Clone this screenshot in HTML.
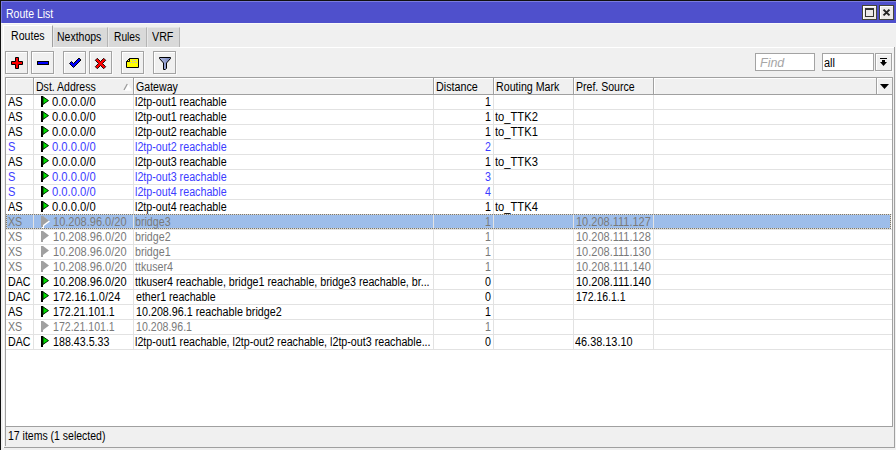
<!DOCTYPE html>
<html lang="en">
<head>
<meta charset="utf-8">
<title>Route List</title>
<style>
html,body{margin:0;padding:0}
body{width:896px;height:450px;position:relative;overflow:hidden;background:#f0f0f0;
 font-family:"Liberation Sans",sans-serif;font-size:12px;line-height:15px;color:#000}
div,span,svg{position:absolute;box-sizing:border-box}
.t{white-space:nowrap;transform-origin:0 0;height:15px}
.k{color:#000}.b{color:#3c3cff}.g{color:#797979}.w{color:#fff}.i{color:#a6a6a6;font-style:italic}
.win{left:0;top:0;width:896px;height:450px;overflow:hidden;background:#f0f0f0}
.edge-t{left:0;top:0;width:896px;height:1px;background:#111}
.edge-l{left:0;top:0;width:1px;height:450px;background:#111}
.title{left:1px;top:1px;width:895px;height:22px;background:#4f50cc;border-top:1px solid #7a7be0;border-left:1px solid #7a7be0}
.tb{width:15px;height:15px;background:#ece9e8;border:1px solid #444438;box-shadow:inset 1px 1px 0 #fff}
.tab{top:27px;height:20px;background:#d9d9d9;border-top:1px solid #e6e6e6;border-left:1px solid #e8e8e8;border-right:1px solid #b4b4b4}
.hl23{left:1px;top:23px;width:895px;height:1px;background:#fafafa}
.tab.act{top:25px;height:22px;background:#f0f0f0;border-top:1px solid #fff;border-left:1px solid #fff;border-right:1px solid #a0a0a0}
.page-t{left:53px;top:47px;width:842px;height:1px;background:#fff}
.page-l{left:3px;top:47px;width:1px;height:401px;background:#fff}
.page-r{left:894px;top:47px;width:1px;height:401px;background:#a0a0a0}
.page-b{left:4px;top:447px;width:891px;height:1px;background:#a0a0a0}
.btn{top:51px;width:23px;height:23px;background:#f0f0f0;border:1px solid #a3a3a3;box-shadow:inset 1px 1px 0 #fff,1px 1px 0 #fafafa}
.btn svg{left:-1px;top:-1px}
.inp{top:53px;height:18px;background:#fff;border:1px solid #a3a3a3}
.table{left:5px;top:77px;width:888px;height:350px;background:#fff;border:1px solid #a0a0a0}
.hdr{left:6px;top:78px;width:886px;height:16px;background:#f0f0f0}
.hdr-b{left:6px;top:94px;width:886px;height:1px;background:#a0a0a0}
.hc{top:78px;height:16px;border-left:1px solid #fff;border-top:1px solid #fff}
.hs{top:78px;width:1px;height:16px;background:#a0a0a0}
.gl-h{left:6px;width:886px;height:1px;background:#e2e2e2}
.gl-v{top:95px;width:1px;height:255px;background:#e2e2e2}
.flag{left:41px}
.selbg{left:6px;width:885px;height:15px;background:#9dbdea}
.seldot{left:6px;width:885px;height:1px}
.sd1{background:repeating-linear-gradient(90deg,#767674 0,#767674 1px,#dcd6c8 1px,#dcd6c8 2px)}
.sd2{background:repeating-linear-gradient(90deg,#767674 0,#767674 1px,#dcd6c8 1px,#dcd6c8 2px)}
.sdv{top:215px;width:1px;height:13px;background:repeating-linear-gradient(180deg,#dcd6c8 0,#dcd6c8 1px,#767674 1px,#767674 2px)}
.status{left:5px;top:427px;width:1px;height:19px;background:#a0a0a0}
</style>
</head>
<body>
<svg width="0" height="0" style="left:0;top:0">
 <defs>
  <linearGradient id="fun" x1="0" y1="0" x2="1" y2="0"><stop offset="0" stop-color="#aab4dc"/><stop offset="0.45" stop-color="#98a4d2"/><stop offset="1" stop-color="#6e7cb4"/></linearGradient>
  <g id="flagk"><rect x="0" y="0" width="2" height="11" fill="#000"/><path d="M2 0.8 L7.5 4.6 L2 8.4 Z" fill="#00e000" stroke="#002800" stroke-width="1" stroke-linejoin="miter"/></g>
  <g id="flagg"><path d="M3 1 L9 5.5 L3 10 Z" fill="#fff"/><rect x="1" y="1" width="2" height="11" fill="#fff"/><rect x="0" y="0" width="2" height="11" fill="#a0a0a0"/><path d="M2 0 L8 4.5 L2 9 Z" fill="#a0a0a0"/></g>
 </defs>
</svg>
<div class="win"></div>
<div class="title">
 <div class="tb" style="left:860px;top:3px"><svg width="13" height="13" viewBox="0 0 13 13" style="left:0;top:0"><rect x="2.5" y="3" width="8" height="7.5" fill="none" stroke="#333" stroke-width="1"/><rect x="2" y="2" width="9" height="2" fill="#333"/></svg></div>
 <div class="tb" style="left:877px;top:3px"><svg width="13" height="13" viewBox="0 0 13 13" style="left:0;top:0"><path d="M3.5 3.6 L9.5 9.4 M9.5 3.6 L3.5 9.4" stroke="#222" stroke-width="2" fill="none"/></svg></div>
</div>
<span class="t w" style="left:5.64px;top:7px;transform:scaleX(0.8751)">Route List</span>
<div class="hl23"></div><div class="edge-t"></div><div class="edge-l"></div>

<div class="tab act" style="left:3px;width:50px"></div>
<div class="tab" style="left:53px;width:55px"></div>
<div class="tab" style="left:108px;width:39px"></div>
<div class="tab" style="left:147px;width:33px"></div>
<span class="t k" style="left:10.89px;top:29px;transform:scaleX(0.8832)">Routes</span><span class="t k" style="left:56.66px;top:30px;transform:scaleX(0.8737)">Nexthops</span><span class="t k" style="left:114.08px;top:30px;transform:scaleX(0.8532)">Rules</span><span class="t k" style="left:152.30px;top:30px;transform:scaleX(0.8908)">VRF</span>
<div class="page-t"></div><div class="page-l"></div><div class="page-r"></div><div class="page-b"></div>

<div class="btn" style="left:5px"><svg width="23" height="23" viewBox="0 0 23 23"><path d="M10.5 6.5h3v4h4v3h-4v4h-3v-4h-4v-3h4z" fill="#ff0000" stroke="#000" stroke-width="1"/></svg></div>
<div class="btn" style="left:31px"><svg width="23" height="23" viewBox="0 0 23 23"><rect x="6.5" y="10.5" width="11" height="3" fill="#0000ff" stroke="#000" stroke-width="1"/></svg></div>
<div class="btn" style="left:63px"><svg width="23" height="23" viewBox="0 0 23 23"><path d="M6.5 12.5 L8.5 10.5 L10.5 12.5 L16 7 L18 9 L10.5 16.5 Z" fill="#0000ff" stroke="#000" stroke-width="1"/></svg></div>
<div class="btn" style="left:89px"><svg width="23" height="23" viewBox="0 0 23 23"><path d="M6.3 9.3 L8.3 7.3 L11.5 10.5 L14.7 7.3 L16.7 9.3 L13.5 12.5 L16.7 15.7 L14.7 17.7 L11.5 14.5 L8.3 17.7 L6.3 15.7 L9.5 12.5 Z" fill="#ff0000" stroke="#000" stroke-width="0.9"/></svg></div>
<div class="btn" style="left:121px"><svg width="23" height="23" viewBox="0 0 23 23"><path d="M5.5 16.5 V10.5 L8.5 7.5 H17.5 V16.5 Z" fill="#ffff00" stroke="#000" stroke-width="1"/><path d="M8.5 7.5 V10.5 H5.5" fill="none" stroke="#000" stroke-width="1"/><path d="M11 9.5h1.2M13.2 9.5h1.8M9 11.5h1M11.2 11.5h1.6M14.1 11.5h1.8" stroke="#b8b8c4" stroke-width="1"/></svg></div>
<div class="btn" style="left:153px"><svg width="23" height="23" viewBox="0 0 23 23"><path d="M6.5 6.5 H17.5 V7.5 L13.5 12 V17.3 L12.3 18.5 H10.5 V12 L6.5 7.5 Z" fill="url(#fun)" stroke="#000" stroke-width="1"/></svg></div>

<div class="inp" style="left:755px;width:60px"></div>
<div class="inp" style="left:822px;width:52px"></div>
<span class="t i" style="left:759.82px;top:56px;transform:scaleX(1.0416)">Find</span><span class="t k" style="left:824.30px;top:56px;transform:scaleX(0.9114)">all</span>
<div class="btn" style="left:875px;top:53px;width:17px;height:18px"><svg width="17" height="18" viewBox="0 0 17 18"><rect x="5" y="5" width="7" height="1" fill="#000"/><path d="M7 7h3v2h2L8.5 13 5 9h2z" fill="#000"/></svg></div>

<div class="table"></div>
<div class="hdr"></div>
<div class="hc" style="left:6px;width:27px"></div><div class="hs" style="left:33px"></div>
<div class="hc" style="left:34px;width:99px"><svg width="10" height="9" viewBox="0 0 10 9" style="left:88px;top:4px"><path d="M1.2 7.3 L4.6 1 L8.4 7.3 Z" fill="#fff" stroke="#fff" stroke-width="0.8"/><path d="M1 7 L4.3 1" stroke="#9a9a9a" stroke-width="1.3" fill="none"/></svg></div><div class="hs" style="left:133px"></div>
<div class="hc" style="left:134px;width:299px"></div><div class="hs" style="left:433px"></div>
<div class="hc" style="left:434px;width:59px"></div><div class="hs" style="left:493px"></div>
<div class="hc" style="left:494px;width:79px"></div><div class="hs" style="left:573px"></div>
<div class="hc" style="left:574px;width:79px"></div><div class="hs" style="left:653px"></div>
<div class="hc" style="left:654px;width:222px"></div><div class="hs" style="left:876px"></div>
<div class="hc" style="left:877px;width:15px"><svg width="10" height="6" viewBox="0 0 10 6" style="left:2px;top:5px"><path d="M0 0 H9 L4.5 5 Z" fill="#000"/></svg></div>
<div class="hdr-b"></div>
<span class="t k" style="left:36.08px;top:80px;transform:scaleX(0.8781)">Dst. Address</span><span class="t k" style="left:135.81px;top:80px;transform:scaleX(0.8840)">Gateway</span><span class="t k" style="left:436.06px;top:80px;transform:scaleX(0.8965)">Distance</span><span class="t k" style="left:495.78px;top:80px;transform:scaleX(0.8883)">Routing Mark</span><span class="t k" style="left:575.62px;top:80px;transform:scaleX(0.8792)">Pref. Source</span>
<div class="selbg" style="top:214px"></div>
<div class="gl-h" style="top:109px"></div><div class="gl-h" style="top:124px"></div><div class="gl-h" style="top:139px"></div><div class="gl-h" style="top:154px"></div><div class="gl-h" style="top:169px"></div><div class="gl-h" style="top:184px"></div><div class="gl-h" style="top:199px"></div><div class="gl-h" style="top:214px"></div><div class="gl-h" style="top:229px"></div><div class="gl-h" style="top:244px"></div><div class="gl-h" style="top:259px"></div><div class="gl-h" style="top:274px"></div><div class="gl-h" style="top:289px"></div><div class="gl-h" style="top:304px"></div><div class="gl-h" style="top:319px"></div><div class="gl-h" style="top:334px"></div><div class="gl-h" style="top:349px"></div>
<div class="gl-v" style="left:33px"></div><div class="gl-v" style="left:133px"></div><div class="gl-v" style="left:433px"></div><div class="gl-v" style="left:493px"></div><div class="gl-v" style="left:573px"></div><div class="gl-v" style="left:653px"></div>
<div class="seldot sd1" style="top:214px"></div><div class="seldot sd2" style="top:228px"></div><div class="sdv" style="left:6px"></div><div class="sdv" style="left:890px"></div>
<svg class="flag" style="top:96px" width="10" height="13" viewBox="0 0 10 13"><use href="#flagk"/></svg><span class="t k" style="left:8.08px;top:95px;transform:scaleX(0.9143)">AS</span><span class="t k" style="left:51.52px;top:95px;transform:scaleX(0.9351)">0.0.0.0/0</span><span class="t k" style="left:134.69px;top:95px;transform:scaleX(0.8919)">l2tp-out1 reachable</span><span class="t k" style="left:485.18px;top:95px;transform:scaleX(0.8900)">1</span>
<svg class="flag" style="top:111px" width="10" height="13" viewBox="0 0 10 13"><use href="#flagk"/></svg><span class="t k" style="left:8.08px;top:110px;transform:scaleX(0.9143)">AS</span><span class="t k" style="left:51.52px;top:110px;transform:scaleX(0.9351)">0.0.0.0/0</span><span class="t k" style="left:134.69px;top:110px;transform:scaleX(0.8919)">l2tp-out1 reachable</span><span class="t k" style="left:485.18px;top:110px;transform:scaleX(0.8900)">1</span><span class="t k" style="left:495.46px;top:110px;transform:scaleX(0.9318)">to_TTK2</span>
<svg class="flag" style="top:126px" width="10" height="13" viewBox="0 0 10 13"><use href="#flagk"/></svg><span class="t k" style="left:8.08px;top:125px;transform:scaleX(0.9143)">AS</span><span class="t k" style="left:51.52px;top:125px;transform:scaleX(0.9351)">0.0.0.0/0</span><span class="t k" style="left:134.69px;top:125px;transform:scaleX(0.8919)">l2tp-out2 reachable</span><span class="t k" style="left:485.18px;top:125px;transform:scaleX(0.8900)">1</span><span class="t k" style="left:495.46px;top:125px;transform:scaleX(0.9318)">to_TTK1</span>
<svg class="flag" style="top:141px" width="10" height="13" viewBox="0 0 10 13"><use href="#flagk"/></svg><span class="t b" style="left:7.97px;top:140px;transform:scaleX(0.9235)">S</span><span class="t b" style="left:51.52px;top:140px;transform:scaleX(0.9351)">0.0.0.0/0</span><span class="t b" style="left:134.69px;top:140px;transform:scaleX(0.8919)">l2tp-out2 reachable</span><span class="t b" style="left:484.85px;top:140px;transform:scaleX(0.8900)">2</span>
<svg class="flag" style="top:156px" width="10" height="13" viewBox="0 0 10 13"><use href="#flagk"/></svg><span class="t k" style="left:8.08px;top:155px;transform:scaleX(0.9143)">AS</span><span class="t k" style="left:51.52px;top:155px;transform:scaleX(0.9351)">0.0.0.0/0</span><span class="t k" style="left:134.69px;top:155px;transform:scaleX(0.8919)">l2tp-out3 reachable</span><span class="t k" style="left:485.18px;top:155px;transform:scaleX(0.8900)">1</span><span class="t k" style="left:495.46px;top:155px;transform:scaleX(0.9318)">to_TTK3</span>
<svg class="flag" style="top:171px" width="10" height="13" viewBox="0 0 10 13"><use href="#flagk"/></svg><span class="t b" style="left:7.97px;top:170px;transform:scaleX(0.9235)">S</span><span class="t b" style="left:51.52px;top:170px;transform:scaleX(0.9351)">0.0.0.0/0</span><span class="t b" style="left:134.69px;top:170px;transform:scaleX(0.8919)">l2tp-out3 reachable</span><span class="t b" style="left:485.02px;top:170px;transform:scaleX(0.8900)">3</span>
<svg class="flag" style="top:186px" width="10" height="13" viewBox="0 0 10 13"><use href="#flagk"/></svg><span class="t b" style="left:7.97px;top:185px;transform:scaleX(0.9235)">S</span><span class="t b" style="left:51.52px;top:185px;transform:scaleX(0.9351)">0.0.0.0/0</span><span class="t b" style="left:134.69px;top:185px;transform:scaleX(0.8919)">l2tp-out4 reachable</span><span class="t b" style="left:484.84px;top:185px;transform:scaleX(0.8900)">4</span>
<svg class="flag" style="top:201px" width="10" height="13" viewBox="0 0 10 13"><use href="#flagk"/></svg><span class="t k" style="left:8.08px;top:200px;transform:scaleX(0.9143)">AS</span><span class="t k" style="left:51.52px;top:200px;transform:scaleX(0.9351)">0.0.0.0/0</span><span class="t k" style="left:134.69px;top:200px;transform:scaleX(0.8919)">l2tp-out4 reachable</span><span class="t k" style="left:485.18px;top:200px;transform:scaleX(0.8900)">1</span><span class="t k" style="left:495.46px;top:200px;transform:scaleX(0.9318)">to_TTK4</span>
<svg class="flag" style="top:216px" width="10" height="13" viewBox="0 0 10 13"><use href="#flagg"/></svg><span class="t g" style="left:8.20px;top:215px;transform:scaleX(0.8900)">XS</span><span class="t g" style="left:52.85px;top:215px;transform:scaleX(0.9184)">10.208.96.0/20</span><span class="t g" style="left:135.28px;top:215px;transform:scaleX(0.8882)">bridge3</span><span class="t g" style="left:485.18px;top:215px;transform:scaleX(0.8900)">1</span><span class="t g" style="left:576.01px;top:215px;transform:scaleX(0.9164)">10.208.111.127</span>
<svg class="flag" style="top:231px" width="10" height="13" viewBox="0 0 10 13"><use href="#flagg"/></svg><span class="t g" style="left:8.20px;top:230px;transform:scaleX(0.8900)">XS</span><span class="t g" style="left:52.85px;top:230px;transform:scaleX(0.9184)">10.208.96.0/20</span><span class="t g" style="left:135.28px;top:230px;transform:scaleX(0.8882)">bridge2</span><span class="t g" style="left:485.18px;top:230px;transform:scaleX(0.8900)">1</span><span class="t g" style="left:576.01px;top:230px;transform:scaleX(0.9164)">10.208.111.128</span>
<svg class="flag" style="top:246px" width="10" height="13" viewBox="0 0 10 13"><use href="#flagg"/></svg><span class="t g" style="left:8.20px;top:245px;transform:scaleX(0.8900)">XS</span><span class="t g" style="left:52.85px;top:245px;transform:scaleX(0.9184)">10.208.96.0/20</span><span class="t g" style="left:135.28px;top:245px;transform:scaleX(0.8882)">bridge1</span><span class="t g" style="left:485.18px;top:245px;transform:scaleX(0.8900)">1</span><span class="t g" style="left:576.01px;top:245px;transform:scaleX(0.9164)">10.208.111.130</span>
<svg class="flag" style="top:261px" width="10" height="13" viewBox="0 0 10 13"><use href="#flagg"/></svg><span class="t g" style="left:8.20px;top:260px;transform:scaleX(0.8900)">XS</span><span class="t g" style="left:52.85px;top:260px;transform:scaleX(0.9184)">10.208.96.0/20</span><span class="t g" style="left:135.46px;top:260px;transform:scaleX(0.8900)">ttkuser4</span><span class="t g" style="left:485.18px;top:260px;transform:scaleX(0.8900)">1</span><span class="t g" style="left:576.01px;top:260px;transform:scaleX(0.9164)">10.208.111.140</span>
<svg class="flag" style="top:276px" width="10" height="13" viewBox="0 0 10 13"><use href="#flagk"/></svg><span class="t k" style="left:7.89px;top:275px;transform:scaleX(0.8883)">DAC</span><span class="t k" style="left:52.85px;top:275px;transform:scaleX(0.9184)">10.208.96.0/20</span><span class="t k" style="left:135.20px;top:275px;transform:scaleX(0.8903)">ttkuser4 reachable, bridge1 reachable, bridge3 reachable, br...</span><span class="t k" style="left:485.18px;top:275px;transform:scaleX(0.8900)">0</span><span class="t k" style="left:576.01px;top:275px;transform:scaleX(0.9164)">10.208.111.140</span>
<svg class="flag" style="top:291px" width="10" height="13" viewBox="0 0 10 13"><use href="#flagk"/></svg><span class="t k" style="left:7.89px;top:290px;transform:scaleX(0.8883)">DAC</span><span class="t k" style="left:52.92px;top:290px;transform:scaleX(0.9162)">172.16.1.0/24</span><span class="t k" style="left:135.56px;top:290px;transform:scaleX(0.8841)">ether1 reachable</span><span class="t k" style="left:485.18px;top:290px;transform:scaleX(0.8900)">0</span><span class="t k" style="left:576.06px;top:290px;transform:scaleX(0.8736)">172.16.1.1</span>
<svg class="flag" style="top:306px" width="10" height="13" viewBox="0 0 10 13"><use href="#flagk"/></svg><span class="t k" style="left:8.08px;top:305px;transform:scaleX(0.9143)">AS</span><span class="t k" style="left:53.05px;top:305px;transform:scaleX(0.8807)">172.21.101.1</span><span class="t k" style="left:136.48px;top:305px;transform:scaleX(0.8948)">10.208.96.1 reachable bridge2</span><span class="t k" style="left:485.18px;top:305px;transform:scaleX(0.8900)">1</span>
<svg class="flag" style="top:321px" width="10" height="13" viewBox="0 0 10 13"><use href="#flagg"/></svg><span class="t g" style="left:8.20px;top:320px;transform:scaleX(0.8900)">XS</span><span class="t g" style="left:53.05px;top:320px;transform:scaleX(0.8807)">172.21.101.1</span><span class="t g" style="left:135.62px;top:320px;transform:scaleX(0.8832)">10.208.96.1</span><span class="t g" style="left:485.18px;top:320px;transform:scaleX(0.8900)">1</span>
<svg class="flag" style="top:336px" width="10" height="13" viewBox="0 0 10 13"><use href="#flagk"/></svg><span class="t k" style="left:7.89px;top:335px;transform:scaleX(0.8883)">DAC</span><span class="t k" style="left:53.00px;top:335px;transform:scaleX(0.8904)">188.43.5.33</span><span class="t k" style="left:134.69px;top:335px;transform:scaleX(0.8914)">l2tp-out1 reachable, l2tp-out2 reachable, l2tp-out3 reachable...</span><span class="t k" style="left:485.18px;top:335px;transform:scaleX(0.8900)">0</span><span class="t k" style="left:574.74px;top:335px;transform:scaleX(0.9077)">46.38.13.10</span>
<div class="status"></div>
<span class="t k" style="left:8.05px;top:429px;transform:scaleX(0.8742)">17 items (1 selected)</span>
</body>
</html>
